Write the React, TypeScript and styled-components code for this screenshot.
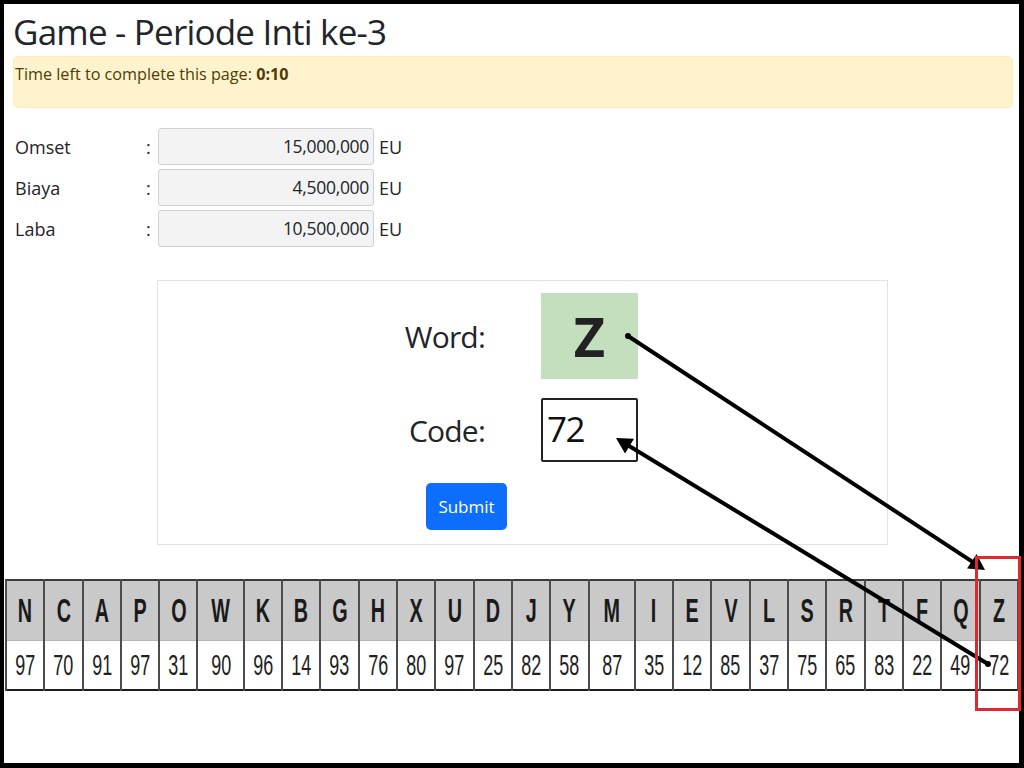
import React from 'react';
import styled, { createGlobalStyle } from 'styled-components';

const GlobalStyle = createGlobalStyle`
  html, body {
    margin: 0;
    padding: 0;
    background: #000;
  }
  body {
    font-family: "Open Sans", "Noto Sans", sans-serif;
    color: #212529;
  }
`;

const Frame = styled.div`
  position: relative;
  margin: 4px 5px 5px 4px;
  height: 759px;
  background: #fff;
`;

const Content = styled.div`
  padding: 0 6px 0 9px;
`;

const Title = styled.h1`
  margin: 0;
  padding-top: 8px;
  font-size: 35px;
  font-weight: 500;
  letter-spacing: -0.8px;
  line-height: 40px;
  color: #212529;
`;

const Alert = styled.div`
  margin-top: 4px;
  height: 52px;
  box-sizing: border-box;
  padding: 6px 1px;
  background: #fff3cd;
  border: 1px solid #ffecb5;
  border-radius: 5px;
  color: #4d3d05;
  font-size: 16.2px;
  line-height: 22px;
`;

const InfoList = styled.div`
  margin-top: 20px;
  display: grid;
  grid-template-columns: 131px 12px 216px auto;
  row-gap: 4px;
  align-items: center;
  width: max-content;
  padding-left: 2px;
`;

const InfoLabel = styled.div`
  font-size: 18px;
`;

const InfoValue = styled.div`
  height: 37px;
  box-sizing: border-box;
  border: 1px solid #cfd2d4;
  border-radius: 3px;
  background: #f3f3f3;
  text-align: right;
  padding: 0 4px;
  font-size: 17.5px;
  letter-spacing: -0.3px;
  line-height: 35px;
`;

const Unit = styled.div`
  font-size: 18px;
  padding-left: 5px;
`;

const Card = styled.div`
  margin: 33px 0 0 144px;
  width: 731px;
  height: 265px;
  box-sizing: border-box;
  border: 1px solid #e3e3e3;
  padding-top: 12px;
`;

const FormGrid = styled.div`
  display: grid;
  grid-template-columns: 327px 97px;
  column-gap: 56px;
  row-gap: 19px;
  align-items: center;
`;

const FieldLabel = styled.div`
  text-align: right;
  font-size: 30px;
  letter-spacing: -0.8px;
`;

const WordBox = styled.div`
  height: 86px;
  background: #c4dfbd;
  display: flex;
  align-items: center;
  justify-content: center;
  font-size: 54px;
  font-weight: 700;
  color: #222;
`;

const CodeInput = styled.div`
  height: 64px;
  box-sizing: border-box;
  border: 2px solid #222;
  border-radius: 2px;
  font-size: 35px;
  letter-spacing: -1.5px;
  line-height: 58px;
  padding-left: 4px;
  color: #111;
`;

const SubmitButton = styled.button`
  margin: 21px 0 0 268px;
  width: 81px;
  height: 47px;
  border: none;
  border-radius: 5px;
  background: #0d6efd;
  color: #fff;
  font-family: inherit;
  font-size: 17px;
`;

const CodeTable = styled.table`
  margin: 34px 0 0 1px;
  width: 1014px;
  table-layout: fixed;
  border-collapse: collapse;
  border-top: 2px solid #3a3a3a;
  border-bottom: 2px solid #1e1e1e;
  border-left: 2px solid #3a3a3a;
  border-right: 2px solid #3a3a3a;
`;

const Column = styled.col<{ $wide?: boolean }>`
  width: ${(p) => (p.$wide ? '46px' : '38px')};
`;

const LetterCell = styled.th`
  height: 59px;
  padding: 0;
  background: #c9c9c9;
  border-left: 2px solid #4c4c4c;
  border-right: 2px solid #4c4c4c;
  border-bottom: 1px solid #b5b5b5;
  font-family: "Liberation Sans", Arial, sans-serif;
  font-size: 33px;
  font-weight: 700;
  color: #1a1a1a;
`;

const NumberCell = styled.td`
  height: 48px;
  padding: 0;
  text-align: center;
  border-left: 2px solid #4c4c4c;
  border-right: 2px solid #4c4c4c;
  font-family: "Liberation Sans", Arial, sans-serif;
  font-size: 29px;
  color: #222;
`;

// the table glyphs are a tall condensed face; squeeze a regular one to match
const Condensed = styled.span<{ $squeeze: number }>`
  display: inline-block;
  transform: scaleX(${(p) => p.$squeeze});
`;

const Overlay = styled.svg`
  position: absolute;
  left: -4px;
  top: -4px;
  width: 1024px;
  height: 768px;
  pointer-events: none;
  overflow: visible;
`;

const letters = 'NCAPOWKBGHXUDJYMIEVLSRTFQZ'.split('');
const codes = [97, 70, 91, 97, 31, 90, 96, 14, 93, 76, 80, 97, 25, 82, 58, 87, 35, 12, 85, 37, 75, 65, 83, 22, 49, 72];

const figures = [
  { label: 'Omset', value: '15,000,000' },
  { label: 'Biaya', value: '4,500,000' },
  { label: 'Laba', value: '10,500,000' },
];

function Arrow({ x1, y1, x2, y2 }: { x1: number; y1: number; x2: number; y2: number }) {
  const angle = Math.atan2(y2 - y1, x2 - x1);
  const len = 18;
  const spread = 0.5;
  const bx = x2 - len * 0.8 * Math.cos(angle);
  const by = y2 - len * 0.8 * Math.sin(angle);
  const p1 = [x2 - len * Math.cos(angle - spread), y2 - len * Math.sin(angle - spread)];
  const p2 = [x2 - len * Math.cos(angle + spread), y2 - len * Math.sin(angle + spread)];
  return (
    <g>
      <line x1={x1} y1={y1} x2={bx} y2={by} stroke="#000" strokeWidth={4} strokeLinecap="round" />
      <circle cx={x1} cy={y1} r={3} fill="#000" />
      <polygon points={`${x2},${y2} ${p1[0]},${p1[1]} ${p2[0]},${p2[1]}`} fill="#000" />
    </g>
  );
}

export default function App() {
  return (
    <>
      <GlobalStyle />
      <Frame>
        <Content>
          <Title>Game - Periode Inti ke-3</Title>
          <Alert>
            Time left to complete this page: <b>0:10</b>
          </Alert>
          <InfoList>
            {figures.map((f) => (
              <React.Fragment key={f.label}>
                <InfoLabel>{f.label}</InfoLabel>
                <InfoLabel>:</InfoLabel>
                <InfoValue>{f.value}</InfoValue>
                <Unit>EU</Unit>
              </React.Fragment>
            ))}
          </InfoList>
          <Card>
            <FormGrid>
              <FieldLabel>Word:</FieldLabel>
              <WordBox>Z</WordBox>
              <FieldLabel>Code:</FieldLabel>
              <CodeInput>72</CodeInput>
            </FormGrid>
            <SubmitButton>Submit</SubmitButton>
          </Card>
        </Content>
        <CodeTable>
          <colgroup>
            {letters.map((l, i) => (
              <Column key={i} $wide={l === 'W' || l === 'M'} />
            ))}
          </colgroup>
          <tbody>
            <tr>
              {letters.map((l, i) => (
                <LetterCell key={i}>
                  <Condensed $squeeze={0.6}>{l}</Condensed>
                </LetterCell>
              ))}
            </tr>
            <tr>
              {codes.map((c, i) => (
                <NumberCell key={i}>
                  <Condensed $squeeze={0.62}>{c}</Condensed>
                </NumberCell>
              ))}
            </tr>
          </tbody>
        </CodeTable>
        <Overlay viewBox="0 0 1024 768">
          <Arrow x1={628} y1={336} x2={985} y2={570} />
          <Arrow x1={988} y1={664} x2={616} y2={438} />
          <rect x={976.5} y={557.5} width={43} height={152} fill="none" stroke="#de2a2f" strokeWidth={3} />
        </Overlay>
      </Frame>
    </>
  );
}
